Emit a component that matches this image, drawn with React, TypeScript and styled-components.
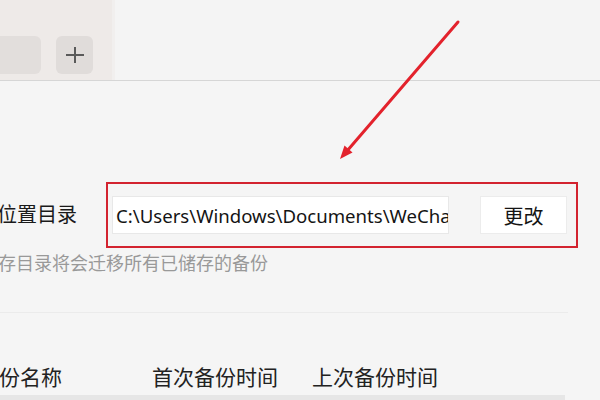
import React from "react";
import styled, { createGlobalStyle } from "styled-components";

const GlobalStyle = createGlobalStyle`
  html, body { margin: 0; padding: 0; background: #f5f5f5; }
  body { font-family: "Noto Sans", "Noto Sans CJK SC", sans-serif; }
  * { box-sizing: border-box; }
`;

const Page = styled.div`
  position: relative;
  width: 600px;
  height: 400px;
  overflow: hidden;
  background: #f5f5f5;
  display: flex;
  flex-direction: column;
`;

const Header = styled.header`
  flex: none;
  height: 81px;
  display: flex;
  background: #f4f4f4;
  border-bottom: 1px solid #d6d6d6;
`;

const SidePanel = styled.div`
  width: 115px;
  display: flex;
  align-items: flex-end;
  gap: 15px;
  padding-bottom: 6px;
  background: #eeeae8;
  border-right: 3px solid #f1efee;
`;

const Tab = styled.div`
  width: 50px;
  height: 38px;
  margin-left: -9px;
  border-radius: 6px;
  background: #e2dedc;
`;

const AddButton = styled.div`
  width: 37px;
  height: 38px;
  border-radius: 6px;
  background: #e0dcda;
  display: flex;
  align-items: center;
  justify-content: center;
`;

const Content = styled.main`
  flex: 1;
  display: flex;
  flex-direction: column;
  margin-left: -43px;
`;

const SettingRow = styled.div`
  display: flex;
  align-items: center;
  margin-top: 101px;
`;

const Label = styled.div`
  width: 149px;
  font-size: 20px;
  line-height: 28px;
  color: #1a1a1a;
  white-space: nowrap;
`;

const Highlight = styled.div`
  width: 472px;
  height: 66px;
  display: flex;
  align-items: center;
  gap: 31px;
  padding: 0 9px 0 4px;
  border: 2px solid #d3232f;
`;

const PathField = styled.input`
  width: 337px;
  height: 38px;
  padding: 0 0 0 3px;
  border: 1px solid #e8e8e8;
  background: #ffffff;
  font-family: "Noto Sans", "Noto Sans CJK SC", sans-serif;
  font-size: 18.6px;
  color: #141414;
  outline: none;
`;

const ChangeButton = styled.button`
  width: 87px;
  height: 38px;
  border: 1px solid #ececec;
  background: #ffffff;
  font-family: "Noto Sans CJK SC", sans-serif;
  font-size: 20px;
  color: #141414;
  padding: 0;
`;

const Hint = styled.div`
  margin-top: 3px;
  margin-left: -13px;
  font-size: 18px;
  line-height: 24px;
  color: #999999;
  white-space: nowrap;
`;

const Divider = styled.div`
  margin-top: 37px;
  width: 611px;
  height: 1px;
  background: #ebebeb;
`;

const TableHead = styled.div`
  display: grid;
  grid-template-columns: 174px 160px 200px;
  margin-top: 50px;
  padding-left: 21px;
  font-size: 21px;
  line-height: 28px;
  color: #222;
  white-space: nowrap;
`;

const TableBar = styled.div`
  margin-top: 4px;
  width: 608px;
  height: 10px;
  background: #e6e6e6;
`;

const Annotation = styled.svg`
  position: absolute;
  left: 0;
  top: 0;
  pointer-events: none;
`;

export default function App() {
  return (
    <Page>
      <GlobalStyle />
      <Header>
        <SidePanel>
          <Tab />
          <AddButton>
            <svg width="20" height="18" viewBox="0 0 20 18">
              <path d="M1 9H19M10 1V17" stroke="#5a5a5a" strokeWidth="2" fill="none" />
            </svg>
          </AddButton>
        </SidePanel>
      </Header>
      <Content>
        <SettingRow>
          <Label>备份位置目录</Label>
          <Highlight>
            <PathField readOnly value="C:\Users\Windows\Documents\WeChat Files" />
            <ChangeButton>更改</ChangeButton>
          </Highlight>
        </SettingRow>
        <Hint>修改储存目录将会迁移所有已储存的备份</Hint>
        <Divider />
        <TableHead>
          <span>备份名称</span>
          <span>首次备份时间</span>
          <span>上次备份时间</span>
        </TableHead>
        <TableBar />
      </Content>
      <Annotation width="600" height="400" viewBox="0 0 600 400">
        <line x1="458" y1="22" x2="347" y2="151" stroke="#e3222c" strokeWidth="3" strokeLinecap="round" />
        <polygon points="340,159 352.5,152.5 344.5,145.5" fill="#e3222c" />
      </Annotation>
    </Page>
  );
}
